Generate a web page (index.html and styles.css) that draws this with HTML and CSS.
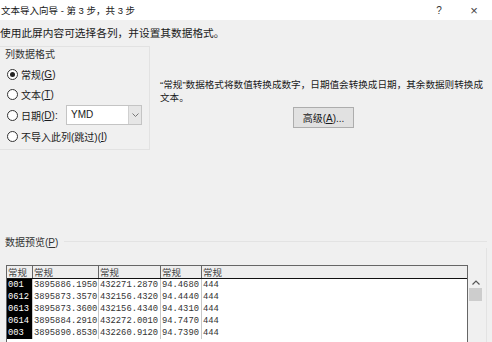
FILE: index.html
```html
<!DOCTYPE html>
<html lang="zh-CN">
<head>
    <meta charset="UTF-8">
    <title>文本导入向导 - 第 3 步，共 3 步</title>
    <link rel="stylesheet" href="styles.css">
</head>
<body>
    <div class="titlebar">
        <span class="title">文本导入向导 - 第 3 步，共 3 步</span>
        <span class="tb-btn">?</span>
        <span class="tb-btn close">×</span>
    </div>
    <p class="intro">使用此屏内容可选择各列，并设置其数据格式。</p>

    <div class="format">
        <div class="group">
            <div class="group-title">列数据格式</div>
            <div class="opt"><span class="radio checked"></span>常规(<u>G</u>)</div>
            <div class="opt"><span class="radio"></span>文本(<u>T</u>)</div>
            <div class="opt date">
                <span class="radio"></span>日期(<u>D</u>):
                <div class="combo">
                    <span class="combo-val">YMD</span>
                    <span class="combo-btn">
                        <svg width="7" height="4" viewBox="0 0 7 4"><path d="M0.5 0.5 L3.5 3.5 L6.5 0.5" fill="none" stroke="#777" stroke-width="1"/></svg>
                    </span>
                </div>
            </div>
            <div class="opt"><span class="radio"></span>不导入此列(跳过)(<u>I</u>)</div>
        </div>
        <div class="desc">
            <p class="desc-text">“常规”数据格式将数值转换成数字，日期值会转换成日期，其余数据则转换成<br>文本。</p>
            <button class="btn">高级(<u>A</u>)...</button>
        </div>
    </div>

    <div class="preview">
        <div class="preview-head">
            <span>数据预览(<u>P</u>)</span>
            <span class="line"></span>
        </div>
        <div class="preview-body">
            <div class="grid-box">
                <div class="row head">
                    <span>常规</span><span>常规</span><span>常规</span><span>常规</span><span>常规</span>
                </div>
                <div class="row"><span>001</span><span>3895886.1950</span><span>432271.2870</span><span>94.4680</span><span>444</span></div>
                <div class="row"><span>0612</span><span>3895873.3570</span><span>432156.4320</span><span>94.4440</span><span>444</span></div>
                <div class="row"><span>0613</span><span>3895873.3600</span><span>432156.4340</span><span>94.4310</span><span>444</span></div>
                <div class="row"><span>0614</span><span>3895884.2910</span><span>432272.0010</span><span>94.7470</span><span>444</span></div>
                <div class="row"><span>003</span><span>3895890.8530</span><span>432260.9120</span><span>94.7390</span><span>444</span></div>
            </div>
            <div class="scroll">
                <svg class="up" width="8" height="5" viewBox="0 0 8 5"><path d="M0.5 4.5 L4 1 L7.5 4.5" fill="none" stroke="#555" stroke-width="1.2"/></svg>
                <div class="thumb"></div>
            </div>
        </div>
    </div>
</body>
</html>
```

FILE: styles.css
```css
body {
    margin: 0;
    width: 492px;
    height: 342px;
    overflow: hidden;
    background: #f0f0f0;
    color: #1a1a1a;
    font-family: "Liberation Sans", "Noto Sans CJK SC", sans-serif;
    font-size: 10px;
}
u {
    text-decoration: underline;
}
.titlebar {
    display: flex;
    align-items: center;
    height: 20px;
    background: #fff;
    padding-right: 3px;
    font-size: 9.5px;
}
.title {
    flex: 1;
    padding-left: 1px;
}
.tb-btn {
    width: 30px;
    text-align: center;
    font-size: 10px;
    color: #333;
}
.tb-btn.close {
    margin-left: 5px;
    font-size: 13px;
    color: #444;
}
.intro {
    margin: 6px 0 0;
    line-height: 14px;
    font-size: 10.7px;
}
.format {
    display: flex;
    margin-top: 6px;
}
.group {
    width: 150px;
    height: 104px;
    box-sizing: border-box;
    border: 1px solid #e2e2e2;
    border-left: none;
    padding: 1px 7px 0 5px;
}
.group-title {
    line-height: 14px;
    color: #333;
}
.opt {
    display: flex;
    align-items: center;
    height: 20px;
    padding-left: 2px;
}
.group-title + .opt {
    margin-top: 2px;
}
.opt.date {
    height: 22px;
}
.radio {
    width: 9px;
    height: 9px;
    border: 1px solid #333;
    border-radius: 50%;
    margin-right: 3px;
    display: flex;
    align-items: center;
    justify-content: center;
    background: #fff;
}
.radio.checked::after {
    content: "";
    width: 5px;
    height: 5px;
    border-radius: 50%;
    background: #222;
}
.combo {
    margin-left: auto;
    width: 76px;
    height: 20px;
    box-sizing: border-box;
    border: 1px solid #c4c4c4;
    background: #fff;
    display: flex;
}
.combo-val {
    flex: 1;
    line-height: 18px;
    padding-left: 4px;
    font-size: 10px;
}
.combo-btn {
    width: 12px;
    background: #e6e6e6;
    border-left: 1px solid #d0d0d0;
    display: flex;
    align-items: center;
    justify-content: center;
}
.desc {
    flex: 1;
    padding-left: 10px;
}
.desc-text {
    margin: 32px 0 0;
    line-height: 13px;
    font-size: 9.6px;
    white-space: nowrap;
}
.btn {
    display: block;
    margin: 3px 0 0 133px;
    width: 61px;
    height: 21px;
    padding: 0;
    background: #e1e1e1;
    border: 1px solid #adadad;
    font-family: inherit;
    font-size: 10px;
    color: #1a1a1a;
}
.preview {
    margin: 84px 5px 0 0;
}
.preview-head {
    display: flex;
    align-items: center;
    height: 14px;
    padding-left: 5px;
    color: #333;
}
.preview-head .line {
    flex: 1;
    margin-left: 6px;
    border-top: 1px solid #e3e3e3;
}
.preview-body {
    display: flex;
    height: 77px;
    padding: 17px 0 0 6px;
    border-right: 1px solid #e3e3e3;
    overflow: hidden;
}
.grid-box {
    width: 462px;
    box-sizing: border-box;
    border: 1px solid #666;
    border-bottom: none;
    background: #fff;
}
.row {
    display: grid;
    grid-template-columns: 26px 66px 62px 41px 1fr;
    height: 12px;
    line-height: 12px;
    font-family: "Liberation Mono", monospace;
    font-size: 8.8px;
    color: #333;
}
.row span {
    border-right: 1px solid #c8c8c8;
    padding-left: 1px;
    white-space: nowrap;
    overflow: hidden;
}
.row span:first-child {
    background: #000;
    color: #fff;
}
.row span:last-child {
    border-right: none;
}
.row.head {
    background: #eee;
    border-bottom: 1px solid #111;
    font-family: "Noto Sans CJK SC", sans-serif;
    font-size: 9.5px;
    color: #444;
}
.row.head span {
    border-right-color: #666;
}
.row.head span:first-child {
    background: none;
    color: #444;
}
.scroll {
    width: 13px;
    margin-left: 1px;
}
.scroll .up {
    display: block;
    margin: 15px auto 0;
}
.thumb {
    margin-top: 3px;
    height: 13px;
    background: #cdcdcd;
}
```
